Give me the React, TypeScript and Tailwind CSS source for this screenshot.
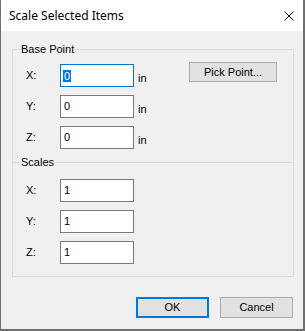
import React from 'react';

const ui = { fontFamily: '"Liberation Sans", Arial, sans-serif' };

function Field({ label, value, unit, focused }: { label: string; value: string; unit?: boolean; focused?: boolean }) {
  return (
    <div className="flex h-[23px] items-center">
      <span className="w-[47px] pl-[13px]">{label}</span>
      <div
        className={
          focused
            ? 'flex h-[23px] w-[74px] items-center border border-[#0078d7] bg-white pl-[2px]'
            : 'flex h-[23px] w-[74px] items-center border border-[#7a7a7a] bg-white pl-[2px]'
        }
      >
        {focused ? (
          <span className="bg-[#0078d7] px-px leading-[12px] text-white">{value}</span>
        ) : (
          <span className="px-px">{value}</span>
        )}
      </div>
      {unit && <span className="ml-[4px] mt-[5px]">in</span>}
    </div>
  );
}

export default function App() {
  return (
    <div
      className="flex h-[331px] w-[305px] flex-col border-b-2 border-l border-r-2 border-[#707070] bg-[#f0f0f0] text-[11px] text-black"
      style={ui}
    >
      {/* title bar */}
      <div className="flex h-[31px] shrink-0 items-center justify-between bg-white pl-[8px] pr-[9px]">
        <span className="text-[12px]" style={{ fontFamily: '"Noto Sans", "Open Sans", sans-serif' }}>
          Scale Selected Items
        </span>
        <svg width="10" height="10" viewBox="0 0 10 10">
          <path d="M0.5 0.5 L9.5 9.5 M9.5 0.5 L0.5 9.5" stroke="#000" strokeWidth="1" />
        </svg>
      </div>

      <div className="pt-[18px]">
        <div className="relative ml-[11px] w-[282px] border border-[#dcdcdc] pt-[14px] pb-[12px]">
          <span className="absolute left-[7px] top-[-8px] bg-[#f0f0f0] px-px leading-[14px]">Base Point</span>

          <div className="flex flex-col gap-[8px]">
            <div className="flex items-center">
              <Field label="X:" value="0" unit focused />
              <button className="-mt-[2px] ml-auto mr-[16px] h-[20px] w-[88px] self-start border border-[#adadad] bg-[#e1e1e1]">
                Pick Point...
              </button>
            </div>
            <Field label="Y:" value="0" unit />
            <Field label="Z:" value="0" unit />
          </div>

          <div className="relative mt-[13px] border-t border-[#dcdcdc] pt-[16px]">
            <span className="absolute left-[7px] top-[-8px] bg-[#f0f0f0] px-px leading-[14px]">Scales</span>
            <div className="flex flex-col gap-[8px]">
              <Field label="X:" value="1" />
              <Field label="Y:" value="1" />
              <Field label="Z:" value="1" />
            </div>
          </div>
        </div>

        <div className="mt-[20px] flex justify-end gap-[11px] pr-[10px]">
          <button className="h-[21px] w-[73px] border-2 border-[#0078d7] bg-[#e1e1e1]">OK</button>
          <button className="h-[21px] w-[73px] border border-[#adadad] bg-[#e1e1e1]">Cancel</button>
        </div>
      </div>
    </div>
  );
}
